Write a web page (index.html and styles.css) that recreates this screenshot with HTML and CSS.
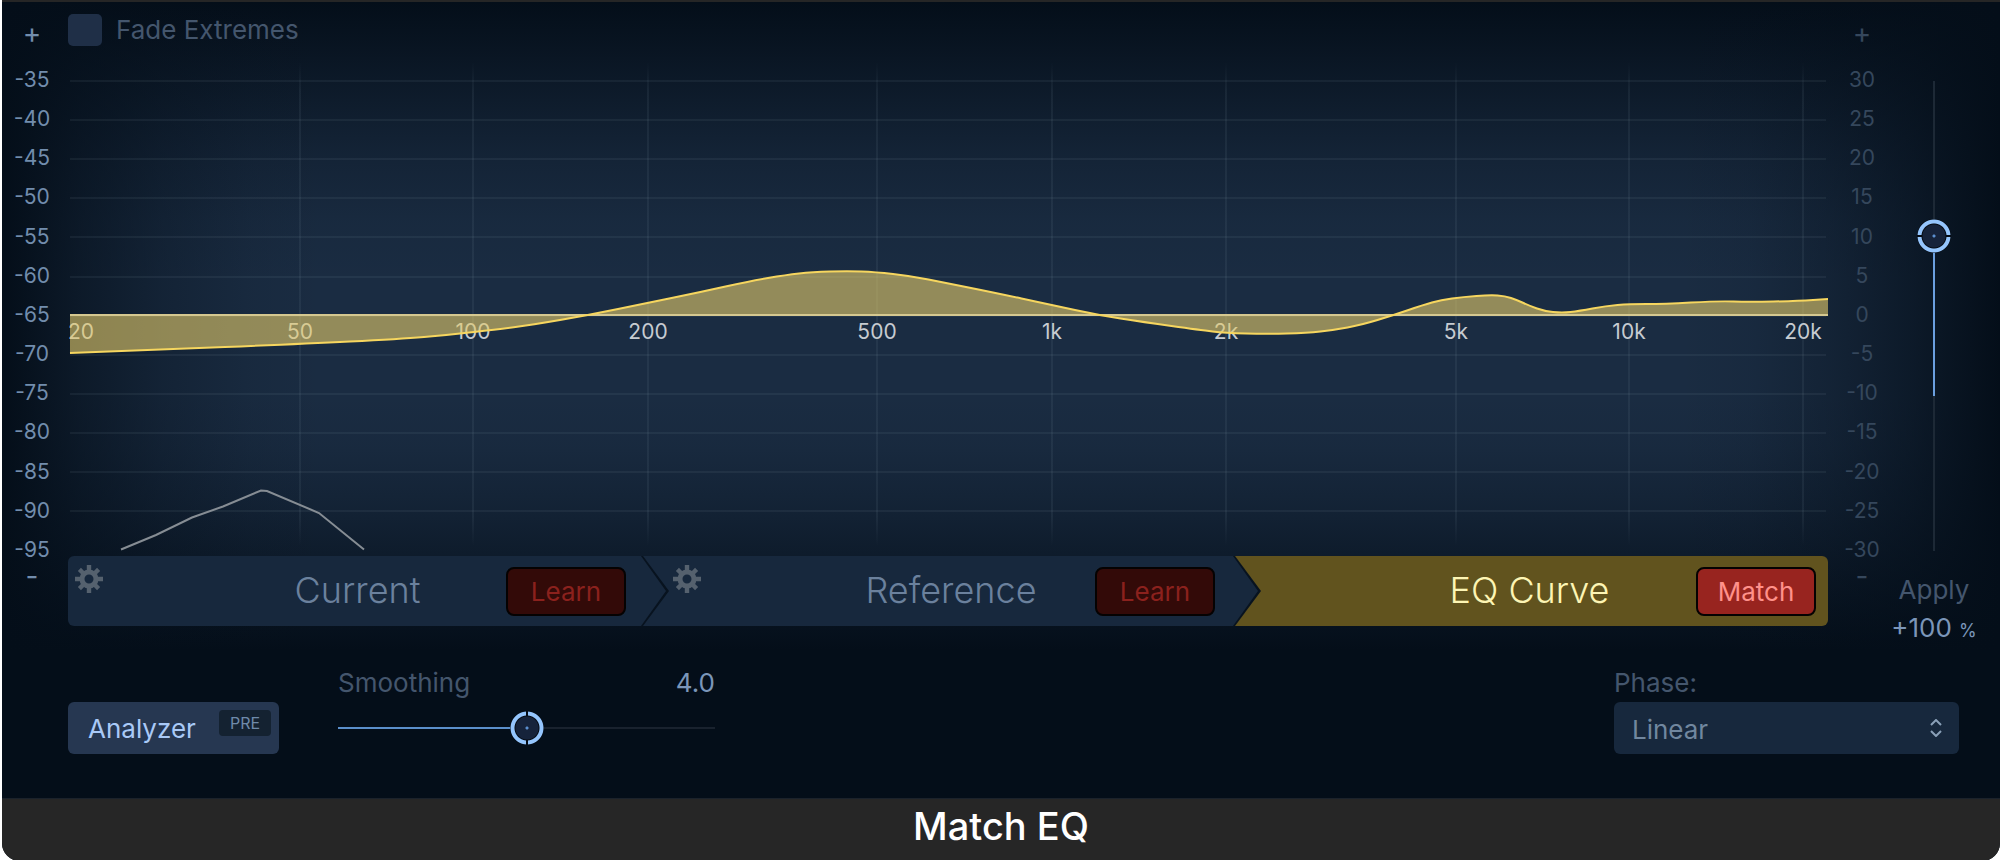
FILE: index.html
```html
<!DOCTYPE html>
<html lang="en">
<head>
  <meta charset="UTF-8" />
  <meta name="viewport" content="width=device-width, initial-scale=1" />
  <title>Match EQ</title>
  <link rel="stylesheet" href="styles.css">
</head>
<body>
  <svg width="0" height="0" class="defs">
    <symbol id="gear" viewBox="-14 -14 28 28">
      <circle r="7" fill="none" stroke="currentColor" stroke-width="5" />
      <g stroke="currentColor" stroke-width="4.4">
        <path d="M0-14V-8M0 14V8M-14 0H-8M14 0H8" />
        <path d="M-9.6-9.6L-6-6M9.6-9.6L6-6M-9.6 9.6L-6 6M9.6 9.6L6 6" />
      </g>
    </symbol>
  </svg>

  <main class="window">
    <section class="display">
      <div class="sign sign-left">+</div>
      <label class="fade"><input type="checkbox" /> Fade Extremes</label>
      <div class="sign sign-right">+</div>

      <ol class="scale scale-left">
        <li>-35</li><li>-40</li><li>-45</li><li>-50</li><li>-55</li><li>-60</li><li>-65</li>
        <li>-70</li><li>-75</li><li>-80</li><li>-85</li><li>-90</li><li>-95</li>
      </ol>

      <div class="plot">
        <div class="freqs" id="freqs"></div>
        <svg id="graph" viewBox="0 0 1760 494" preserveAspectRatio="none">
          <defs>
            <linearGradient id="fadeLine" gradientUnits="userSpaceOnUse" x1="0" y1="0" x2="0" y2="484">
              <stop offset="0" stop-color="#8ea6b4" stop-opacity="0" />
              <stop offset="0.06" stop-color="#8ea6b4" stop-opacity="0.09" />
              <stop offset="0.94" stop-color="#8ea6b4" stop-opacity="0.09" />
              <stop offset="1" stop-color="#8ea6b4" stop-opacity="0" />
            </linearGradient>
          </defs>
          <g id="grid"></g>
          <path class="analyzer-line" d="M53 487.500L88 473L124 455.500L155 444.500L193 428.500L199 429L251 451L296 487.500" />
          <path class="curve-fill" id="fill" />
          <path class="zero-line" d="M2 253H1760" />
          <path class="curve-line" id="line" />
        </svg>
      </div>

      <ol class="scale scale-right">
        <li>30</li><li>25</li><li>20</li><li>15</li><li>10</li><li>5</li><li>0</li>
        <li>-5</li><li>-10</li><li>-15</li><li>-20</li><li>-25</li><li>-30</li>
      </ol>
      <input type="range" class="slider slider-v" id="apply" min="-300" max="300" value="102" />

      <div class="sign sign-left sign-minus">-</div>
      <div class="steps">
        <div class="step step-current">
          <svg class="gear"><use href="#gear" /></svg>
          <h2>Current</h2>
          <button type="button">Learn</button>
        </div>
        <div class="step step-reference">
          <svg class="gear"><use href="#gear" /></svg>
          <h2>Reference</h2>
          <button type="button">Learn</button>
        </div>
        <div class="step step-curve">
          <span></span>
          <h2>EQ Curve</h2>
          <button type="button" class="active">Match</button>
        </div>
      </div>
      <div class="sign sign-right sign-minus">-</div>
      <div class="apply">
        <label for="apply">Apply</label>
        <output for="apply">+100 <small>%</small></output>
      </div>
    </section>

    <section class="controls">
      <button type="button" class="analyzer">Analyzer <span class="badge">PRE</span></button>
      <div class="field smoothing">
        <div class="field-head">
          <label for="smoothing">Smoothing</label>
          <output for="smoothing">4.0</output>
        </div>
        <div class="field-body">
          <input type="range" class="slider slider-h" id="smoothing" min="0" max="8" step="0.1" value="4" />
        </div>
      </div>
      <div class="field phase">
        <div class="field-head"><label for="phase">Phase:</label></div>
        <div class="field-body select">
          <select id="phase"><option>Linear</option><option>Minimal</option></select>
          <svg width="12" height="18" viewBox="0 0 12 18"><path d="M1 6L6 1L11 6M1 12L6 17L11 12" /></svg>
        </div>
      </div>
    </section>

    <footer><h1>Match EQ</h1></footer>
  </main>

  <script>
    const WIDTH = 1760;
    const ZERO = 253;

    // label, x position in the graph
    const freqs = [
      ['20', 13], ['50', 232], ['100', 405], ['200', 580], ['500', 809], ['1k', 984],
      ['2k', 1158], ['5k', 1388], ['10k', 1561], ['20k', 1735]
    ];

    const curve = [
      [2, 291], [82, 288], [232, 282], [332, 277], [380, 273], [432, 267], [463, 263], [521, 253],
      [579, 241], [633, 230], [682, 219], [718, 213], [744, 210], [780, 209], [807, 210],
      [843, 214], [878, 221], [923, 230], [984, 243], [1030, 253], [1075, 260], [1132, 268],
      [1157, 271], [1199, 272], [1239, 271], [1266, 268], [1293, 263], [1326, 253],
      [1355, 243], [1373, 238], [1395, 235], [1422, 233], [1437, 234], [1449, 238],
      [1462, 244], [1476, 249], [1494, 251], [1511, 249], [1538, 244], [1561, 242],
      [1596, 242], [1650, 239], [1681, 240], [1730, 239], [1760, 237]
    ];

    // smooth the points by running quadratics through their midpoints
    function smooth(points) {
      let d = `M${points[0]}`;
      for (let i = 1; i < points.length - 1; i++) {
        const [x, y] = points[i];
        const [nx, ny] = points[i + 1];
        d += ` Q${x} ${y} ${(x + nx) / 2} ${(y + ny) / 2}`;
      }
      return d + ` L${points[points.length - 1]}`;
    }

    let grid = '';
    for (let i = 0; i < 12; i++) {
      const y = Math.round(19 + i * 39.1);
      grid += `<path class="row" d="M2 ${y}H1758" />`;
    }
    freqs.slice(1).forEach(([, x]) => {
      grid += `<path stroke="url(#fadeLine)" stroke-width="2" d="M${x} 0V484" />`;
    });
    document.getElementById('grid').innerHTML = grid;

    document.getElementById('freqs').innerHTML = freqs
      .map(([text, x]) => `<span style="left: ${x / WIDTH * 100}%">${text}</span>`)
      .join('');

    const line = smooth(curve);
    document.getElementById('line').setAttribute('d', line);
    document.getElementById('fill').setAttribute('d', `${line} V${ZERO} H2 Z`);
  </script>
</body>
</html>
```
FILE: styles.css
```css
* {
  box-sizing: border-box;
}
body {
  margin: 0;
  background: #fff;
  font-family: Inter, "Liberation Sans", sans-serif;
  font-size: 26px;
  color: #44566d;
}
h1, h2 {
  margin: 0;
}
button, select {
  font: inherit;
  cursor: pointer;
}
.defs {
  position: absolute;
}
.window {
  margin-left: 2px;
  background: #040e19;
  border-top: 2px solid #262626;
  border-radius: 0 0 18px 18px;
  overflow: hidden;
}

/* graph area */
.display {
  --d0: rgba(4, 14, 25, 1);
  --d1: rgba(4, 14, 25, 0.6);
  --d2: rgba(4, 14, 25, 0.3);
  --d3: rgba(4, 14, 25, 0.08);
  --d4: rgba(4, 14, 25, 0);
  display: grid;
  grid-template-columns: 66px 1fr 68px 76px;
  grid-template-rows: 60px 494px auto;
  padding-right: 28px;
  background:
    linear-gradient(to right, var(--d0), var(--d1) 80px, var(--d2) 160px, var(--d3) 250px, var(--d4) 320px),
    linear-gradient(to left, var(--d0), var(--d1) 90px, var(--d2) 170px, var(--d3) 250px, var(--d4) 320px),
    linear-gradient(to bottom, var(--d0), var(--d1) 85px, var(--d2) 150px, var(--d3) 220px, var(--d4) 280px),
    linear-gradient(to top, var(--d0), var(--d1) 85px, var(--d2) 145px, var(--d3) 205px, var(--d4) 255px),
    #1a2c42;
}
.sign {
  padding-top: 4px;
  font-size: 28px;
  line-height: 54px;
  text-align: center;
}
.sign-left, .scale-left {
  grid-column: 1;
  padding-right: 6px;
  color: #728dad;
}
.sign-right, .scale-right {
  grid-column: 3;
  color: #35475c;
}
.sign-minus {
  padding-top: 0;
  line-height: 40px;
}
.fade {
  grid-column: 2;
  display: flex;
  align-items: center;
  gap: 14px;
  line-height: 54px;
  margin-bottom: 4px;
}
.fade input {
  appearance: none;
  width: 34px;
  height: 32px;
  margin: 0;
  background: #1f2f47;
  border-radius: 5px;
}
.scale {
  display: flex;
  flex-direction: column;
  justify-content: space-between;
  margin: 6px 0 -6px;
  padding-left: 0;
  list-style: none;
  font-size: 21px;
  line-height: 24px;
  text-align: center;
}
.plot {
  grid-column: 2;
  position: relative;
}
.plot svg {
  position: relative;
  display: block;
  width: 100%;
  height: 100%;
}
.plot path {
  vector-effect: non-scaling-stroke;
}
.freqs span {
  position: absolute;
  top: 258px;
  transform: translateX(-50%);
  font-size: 21px;
  line-height: 24px;
  color: #c6cbd1;
}
.row {
  stroke: #8ea6b4;
  stroke-opacity: 0.09;
  stroke-width: 2;
}
.analyzer-line {
  fill: none;
  stroke: #868d94;
  stroke-width: 2;
}
.curve-fill {
  fill: #e4cb6a;
  fill-opacity: 0.6;
}
.curve-line {
  fill: none;
  stroke: #f6d65f;
  stroke-width: 2;
}
.zero-line {
  stroke: #d5c890;
  stroke-width: 2;
}

/* sliders */
.slider {
  --thumb: 34px;
  appearance: none;
  margin: 0;
  cursor: pointer;
}
.slider::-webkit-slider-thumb {
  appearance: none;
  width: var(--thumb);
  height: var(--thumb);
  border-radius: 50%;
  background:
    radial-gradient(circle, #5b8fd0 1px, #16233b 2px, #16233b 11px, transparent 12px),
    linear-gradient(var(--notch), transparent 16px, #050b14 16px, #050b14 18px, transparent 18px),
    radial-gradient(circle, #050b14 12px, #94c5fd 13px, #94c5fd 16px, #050b14 17px);
}
.slider-h {
  --notch: to right;
  width: 100%;
  height: 34px;
  background:
    linear-gradient(to right, #5b8fcb 50%, #19222e 50%) center / 100% 2px no-repeat;
}
.slider-v {
  --notch: to bottom;
  grid-column: 4;
  writing-mode: vertical-lr;
  direction: rtl;
  justify-self: center;
  width: 34px;
  height: 504px;
  margin-top: 2px;
  margin-bottom: -12px;
  background:
    linear-gradient(#1d2936 33%, #6b9fdf 33%, #6b9fdf 67%, #1d2936 67%) center / 2px 470px no-repeat;
}

/* Current > Reference > EQ Curve */
.steps {
  grid-column: 2;
  display: grid;
  grid-template-columns: 573fr 592fr 595fr;
  align-self: start;
  border-radius: 6px;
  overflow: hidden;
}
.step {
  position: relative;
  display: grid;
  grid-template-columns: 1fr auto 1fr;
  align-items: center;
  height: 70px;
  background: #17283d;
  color: #6b819d;
}
.step h2 {
  padding-bottom: 2px;
  font-size: 36px;
  font-weight: 300;
}
.step::before, .step::after {
  content: "";
  position: absolute;
  top: 0;
  left: 100%;
  width: 25px;
  height: 100%;
  clip-path: polygon(0 0, 100% 50%, 0 100%);
  background: #17283d;
}
.step::before {
  width: 28px;
  background: #08131f;
  clip-path: polygon(0 0, 2px 0, 100% 50%, 2px 100%, 0 100%);
}
.step-current {
  z-index: 2;
  padding: 0 15px 0 21px;
}
.step-reference {
  z-index: 1;
  padding: 0 18px 0 46px;
}
.step-curve {
  padding: 0 12px 0 10px;
  background: #61531e;
  color: #fdf5b4;
}
.step-curve::before, .step-curve::after {
  display: none;
}
.gear {
  align-self: start;
  width: 28px;
  height: 28px;
  margin: 9px 0 0 -14px;
  color: #55616e;
}
.step button {
  justify-self: end;
  width: 120px;
  height: 49px;
  padding: 0;
  background: #330a08;
  border: 2px solid #050202;
  border-radius: 8px;
  color: #8b211d;
}
.step button.active {
  background: #98241f;
  color: #ff918a;
}
.apply {
  grid-column: 4;
  display: flex;
  flex-direction: column;
  align-items: center;
  padding-top: 15px;
  line-height: 38px;
  white-space: nowrap;
}
output {
  color: #7b96b9;
}
small {
  font-size: 18px;
}

/* bottom row */
.controls {
  display: flex;
  align-items: flex-end;
  padding: 16px 41px 44px 66px;
}
.analyzer {
  display: flex;
  justify-content: space-between;
  width: 211px;
  height: 52px;
  padding: 8px 8px 0 20px;
  background: #263751;
  border: 0;
  border-radius: 6px;
  line-height: 38px;
  color: #a9c9f7;
}
.badge {
  width: 52px;
  height: 26px;
  background: #142231;
  border-radius: 4px;
  font-size: 16px;
  line-height: 26px;
  color: #6f8aaa;
}
.field-head {
  display: flex;
  justify-content: space-between;
  margin-bottom: 2px;
  line-height: 34px;
}
.field-body {
  display: flex;
  align-items: center;
  height: 52px;
}
.smoothing {
  width: 377px;
  margin-left: 59px;
}
.phase {
  width: 345px;
  margin-left: auto;
}
.select {
  position: relative;
}
.select select {
  appearance: none;
  width: 100%;
  height: 100%;
  padding: 2px 18px 0;
  background: #17283d;
  border: 0;
  border-radius: 6px;
  color: #71879f;
}
.select svg {
  position: absolute;
  right: 17px;
  fill: none;
  stroke: #8aa0b8;
  stroke-width: 2;
  pointer-events: none;
}
footer {
  padding-bottom: 8px;
  background: #262626;
  border-top: 1px solid #1b222b;
  text-align: center;
}
footer h1 {
  font-size: 38px;
  font-weight: 500;
  line-height: 54px;
  color: #fff;
}
```
